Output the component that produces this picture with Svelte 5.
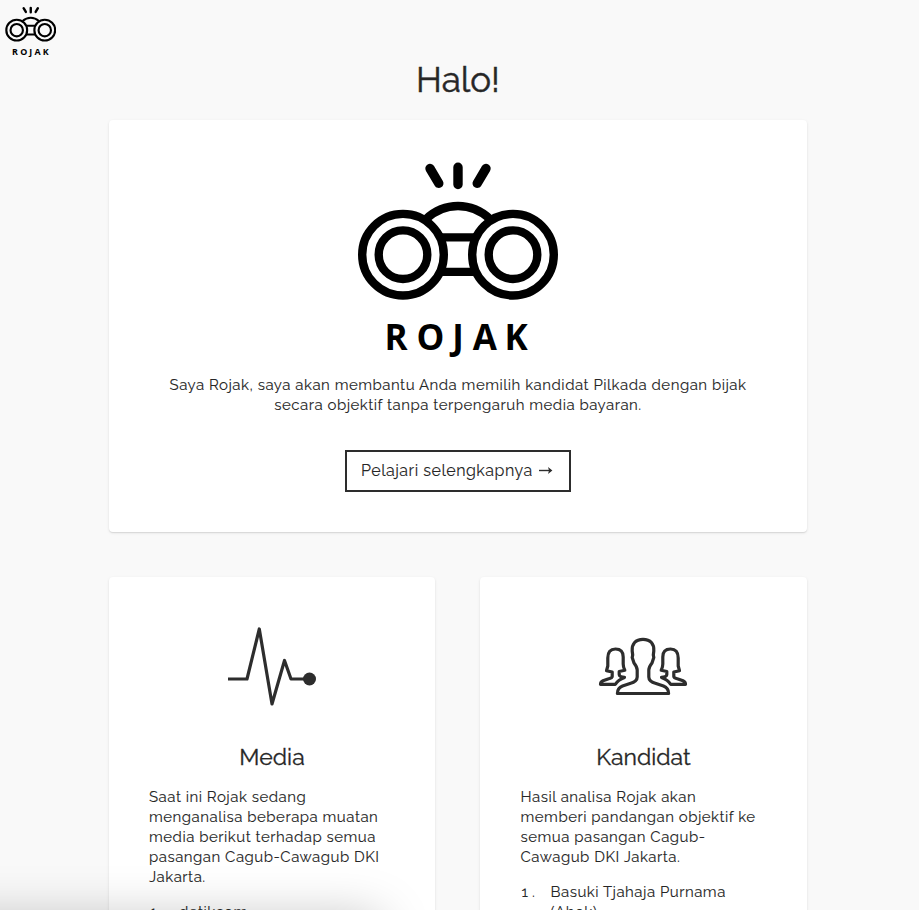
<script>
  const intro = [
    'Saya Rojak, saya akan membantu Anda memilih kandidat Pilkada dengan bijak',
    'secara objektif tanpa terpengaruh media bayaran.'
  ];
  const cards = [
    {
      icon: 'pulse',
      title: 'Media',
      lines: [
        'Saat ini Rojak sedang',
        'menganalisa beberapa muatan',
        'media berikut terhadap semua',
        'pasangan Cagub-Cawagub DKI',
        'Jakarta.'
      ],
      item: ['detikcom']
    },
    {
      icon: 'people',
      title: 'Kandidat',
      lines: [
        'Hasil analisa Rojak akan',
        'memberi pandangan objektif ke',
        'semua pasangan Cagub-',
        'Cawagub DKI Jakarta.'
      ],
      item: ['Basuki Tjahaja Purnama', '(Ahok)']
    }
  ];
</script>

{#snippet logo(cls)}
  <svg class={cls} viewBox="0 0 202 200" role="img" aria-label="Rojak">
    <g fill="none" stroke="#000" stroke-width="8.4">
      <circle cx="46" cy="94.7" r="40.8" />
      <circle cx="46" cy="94.7" r="24.3" />
      <circle cx="156" cy="94.7" r="40.8" />
      <circle cx="156" cy="94.7" r="24.3" />
      <path d="M69 59Q83 46 101 46T133 59M83 77.4H119M83 111.9H119" />
      <path stroke-linecap="round" stroke-width="9.4" d="M73 8.5L81.8 23.3M101 7.3V24.5M129 8.5L120.2 23.3" />
    </g>
    <text y="190.4" x="27.6 59.4 95.2 115.8 147.6">ROJAK</text>
  </svg>
{/snippet}

{#snippet rows(lines)}
  {#each lines as line}
    <span class="line">{line}</span>
  {/each}
{/snippet}

<div class="page">
  {@render logo('brand')}
  <main>
    <h1>Halo!</h1>
    <section class="card hero">
      {@render logo('mark')}
      <p>{@render rows(intro)}</p>
      <a class="button" href="#media"><span>Pelajari selengkapnya</span>
        <svg viewBox="0 0 14 10" width="14" height="10"><path d="M0 4.5H12" fill="none" stroke="#2d2d2d" stroke-width="1.4" /><path d="M9 1L13.4 4.5L9 8L10 4.5Z" fill="#2d2d2d" /></svg>
      </a>
    </section>
    <div class="columns">
      {#each cards as card}
        <section class="card column">
          <svg class="icon" viewBox="0 0 100 100">
            {#if card.icon === 'pulse'}
              <path d="M6 62H25L37.3 12L50 87L62.5 43.5L69 62H87" />
              <circle cx="87.5" cy="62" r="6.5" />
            {:else}
              <path d="M50 22.3C42.5 22.3 38.7 27 39.2 34L39.7 38L39.2 40.5L41 46Q44.2 50 44.2 53V60Q44.2 64.5 37 66.5L29.5 69Q24.4 71 24.4 76.5H75.6Q75.6 71 70.5 69L63 66.5Q55.8 64.5 55.8 60V53Q55.8 50 59 46L60.8 40.5L60.3 38L60.8 34C61.3 27 57.5 22.3 50 22.3Z" />
              <path d="M22.5 32Q14.8 32 14.8 41V49L13.5 53.7L19.2 55V59.5Q19.2 61 15 62L10 63.8Q7.5 65 7.5 67.3H22.4Q25 62.7 31.5 60.4Q26.2 60 26.2 57.5V54.5L31.8 53.3Q30.2 50 30.2 47V40Q30.2 32 22.5 32Z" />
              <path d="M77.5 32Q85.2 32 85.2 41V49L86.5 53.7L80.8 55V59.5Q80.8 61 85 62L90 63.8Q92.5 65 92.5 67.3H77.6Q75 62.7 68.5 60.4Q73.8 60 73.8 57.5V54.5L68.2 53.3Q69.8 50 69.8 47V40Q69.8 32 77.5 32Z" />
            {/if}
          </svg>
          <h2>{card.title}</h2>
          <p>{@render rows(card.lines)}</p>
          <div class="item">
            <span class="number">1.</span>
            <div>{@render rows(card.item)}</div>
          </div>
        </section>
      {/each}
    </div>
  </main>
  <div class="shade"></div>
</div>

<style>
  :global(body) { margin: 0; background: #f9f9f9; }
  .page {
    position: relative;
    height: 910px;
    overflow: hidden;
    background: #f9f9f9;
    color: #262626;
    font: 15px/20px Raleway, Lato, sans-serif;
    letter-spacing: 0.5px;
    -webkit-text-stroke: 0.1px #262626;
  }
  main {
    box-sizing: border-box;
    width: 698px;
    margin-left: 109px;
    padding-top: 60px;
  }
  h1, h2, p { margin: 0; font-weight: 400; }
  h1 { font-size: 35px; line-height: 40px; text-align: center; letter-spacing: 0; -webkit-text-stroke: 0.5px #2d2d2d; }
  svg { display: block; }
  svg text { font: 700 35px 'Open Sans', sans-serif; letter-spacing: 0; fill: #000; -webkit-text-stroke: 0; }
  .brand { position: absolute; left: 4.6px; top: 6px; width: 51.5px; height: 51px; }
  .card {
    box-sizing: border-box;
    background: #fff;
    border-radius: 4px;
    padding: 40px;
    box-shadow: 0 1px 3px rgba(0, 0, 0, 0.1), 0 1px 1px rgba(0, 0, 0, 0.07);
  }
  .hero {
    display: flex;
    flex-direction: column;
    align-items: center;
    height: 412px;
    margin-top: 20px;
    text-align: center;
  }
  .mark { width: 202px; height: 200px; margin-bottom: 15px; flex: none; }
  .line { display: block; white-space: nowrap; }
  .button {
    box-sizing: border-box;
    display: flex;
    align-items: center;
    gap: 6px;
    width: 226px;
    height: 42px;
    margin-top: 35px;
    padding: 0 0 0 14px;
    border: 2px solid #2d2d2d;
    color: inherit;
    font-size: 16px;
    text-decoration: none;
    white-space: nowrap;
  }
  .columns { display: flex; gap: 45px; margin-top: 45px; }
  .column { width: 326px; height: 420px; flex: none; }
  .column + .column { width: 327px; padding-left: 40.5px; padding-right: 40.5px; }
  .icon { width: 100px; height: 100px; margin: 0 auto 26px; fill: none; stroke: #2d2d2d; stroke-width: 3.2; stroke-linejoin: round; }
  .column + .column .icon { margin-left: 72.6px; }
  .icon circle { fill: #2d2d2d; stroke: none; }
  h2 { margin-bottom: 16px; font-size: 23px; line-height: 28px; text-align: center; letter-spacing: 0; -webkit-text-stroke: 0.3px #2d2d2d; }
  .item { display: flex; margin-top: 15px; }
  .number { box-sizing: border-box; width: 30px; flex: none; padding-left: 1px; letter-spacing: 4px; }
  .shade {
    position: absolute;
    left: -60px;
    top: 918px;
    width: 440px;
    height: 100px;
    box-shadow: 0 0 50px rgba(0, 0, 0, 0.25);
  }
</style>
